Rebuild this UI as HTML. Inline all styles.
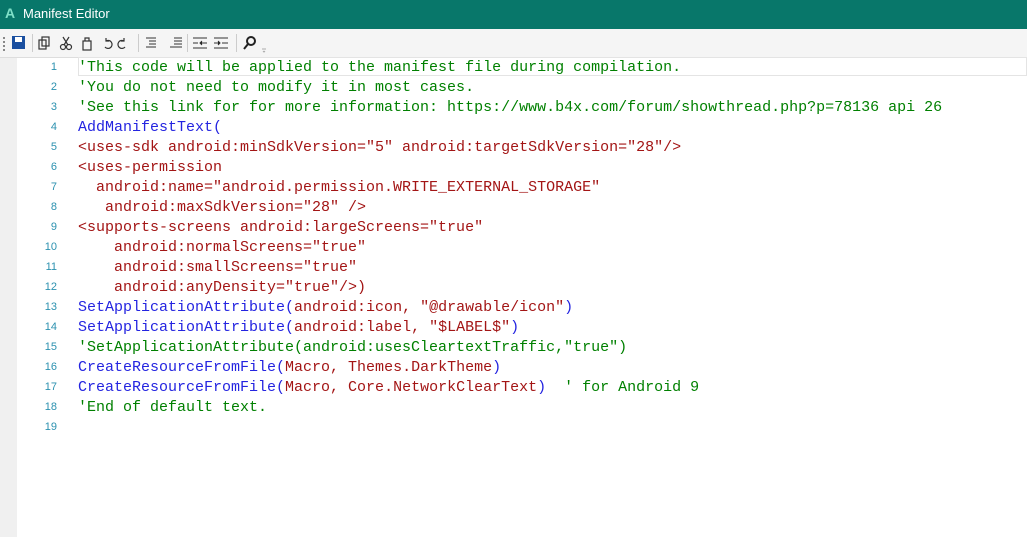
<!DOCTYPE html>
<html><head><style>
body{margin:0;width:1027px;height:537px;overflow:hidden;background:#fff;font-family:"Liberation Sans",sans-serif;position:relative}
.title{position:absolute;left:0;top:0;width:1027px;height:29px;background:#08776a;color:#fff;font-size:13px}
.title .a{position:absolute;left:5px;top:5px;color:#7fe0c8;font-weight:bold;font-size:14px}
.title .t{position:absolute;left:23px;top:6px}
.tb{position:absolute;left:0;top:29px;width:1027px;height:28px;background:#f5f5f5;border-bottom:1px solid #ddd}
.gut{position:absolute;left:0;top:58px;width:17px;height:479px;background:#f0f0f0}
.cur{position:absolute;left:78px;top:57px;width:949px;height:19px;border:1px solid #e4e4e4;box-sizing:border-box}
.ln{position:absolute;left:17px;width:40px;text-align:right;font-size:11px;color:#2b91af;font-family:"Liberation Sans",sans-serif}
.code{position:absolute;left:78px;font-family:"Liberation Mono",monospace;font-size:15px;white-space:pre;letter-spacing:0}
.g{color:#008000}.b{color:#2424e0}.r{color:#a31515}
.sep{position:absolute;top:34px;width:1px;height:18px;background:#ccc}
</style></head><body>
<div class="title"><span class="a">A</span><span class="t">Manifest Editor</span></div>
<div class="tb"></div>
<div style="position:absolute;left:3px;top:37px;width:2px;height:14px;border-left:2px dotted #888"></div>
<svg style="position:absolute;left:12px;top:36px" width="13" height="13"><rect x="0" y="0" width="13" height="13" fill="#1a4fa0"/><rect x="3" y="1" width="7" height="5" fill="#fff"/></svg>
<div class="sep" style="left:32px"></div>
<svg style="position:absolute;left:38px;top:35px" width="110" height="16" fill="none" stroke="#333" stroke-width="1.2">
<rect x="1" y="5" width="7" height="9"/><rect x="4" y="2" width="7" height="9"/>
<circle cx="25" cy="12" r="2.5"/><circle cx="31" cy="12" r="2.5"/><path d="M26 10 L31 2 M30 10 L25 2"/>
<rect x="45" y="6" width="8" height="9"/><path d="M47 6 V3 h4 v3"/>
<path d="M68 6 a4 4 0 1 1 -1 6 M68 3 v3 h3"/><path d="M86 6 a4 4 0 1 0 1 6 M86 3 v3 h-3"/>
</svg>
<div class="sep" style="left:138px"></div>
<svg style="position:absolute;left:144px;top:36px" width="40" height="14" stroke="#333"><path d="M2 2h10M5 5h7M5 8h7M2 11h10M30 2h8M30 5h8M30 8h8M26 11h12"/></svg>
<div class="sep" style="left:187px"></div>
<svg style="position:absolute;left:192px;top:36px" width="40" height="14" stroke="#333"><path d="M1 2h14M1 7h5M9 7h6M1 12h14M10 5l-2 2 2 2M22 2h14M22 7h5M30 7h6M22 12h14M26 5l2 2-2 2"/></svg>
<div class="sep" style="left:236px"></div>
<svg style="position:absolute;left:242px;top:35px" width="24" height="18" fill="none" stroke="#222" stroke-width="2"><circle cx="9" cy="6" r="4"/><path d="M6 9 L2 14"/><path d="M20 14 h4 M21 16 l1 1 1-1" stroke="#aaa" stroke-width="1"/></svg>
<div class="gut"></div>
<div class="cur"></div>
<div id="c"></div>
<script>
var L=[
'<span class="g">\'This code will be applied to the manifest file during compilation.</span>',
'<span class="g">\'You do not need to modify it in most cases.</span>',
'<span class="g">\'See this link for for more information: https://www.b4x.com/forum/showthread.php?p=78136 api 26</span>',
'<span class="b">AddManifestText(</span>',
'<span class="r">&lt;uses-sdk android:minSdkVersion="5" android:targetSdkVersion="28"/&gt;</span>',
'<span class="r">&lt;uses-permission</span>',
'<span class="r">  android:name="android.permission.WRITE_EXTERNAL_STORAGE"</span>',
'<span class="r">   android:maxSdkVersion="28" /&gt;</span>',
'<span class="r">&lt;supports-screens android:largeScreens="true"</span>',
'<span class="r">    android:normalScreens="true"</span>',
'<span class="r">    android:smallScreens="true"</span>',
'<span class="r">    android:anyDensity="true"/&gt;)</span>',
'<span class="b">SetApplicationAttribute(</span><span class="r">android:icon, "@drawable/icon"</span><span class="b">)</span>',
'<span class="b">SetApplicationAttribute(</span><span class="r">android:label, "$LABEL$"</span><span class="b">)</span>',
'<span class="g">\'SetApplicationAttribute(android:usesCleartextTraffic,"true")</span>',
'<span class="b">CreateResourceFromFile(</span><span class="r">Macro, Themes.DarkTheme</span><span class="b">)</span>',
'<span class="b">CreateResourceFromFile(</span><span class="r">Macro, Core.NetworkClearText</span><span class="b">)</span>  <span class="g">\' for Android 9</span>',
'<span class="g">\'End of default text.</span>',
''];
var h='';for(var i=0;i<19;i++){var y=58+i*20;h+='<div class="ln" style="top:'+(y+3)+'px">'+(i+1)+'</div><div class="code" style="top:'+(y+1)+'px">'+L[i]+'</div>';}
document.getElementById('c').innerHTML=h;
</script>
</body></html>
